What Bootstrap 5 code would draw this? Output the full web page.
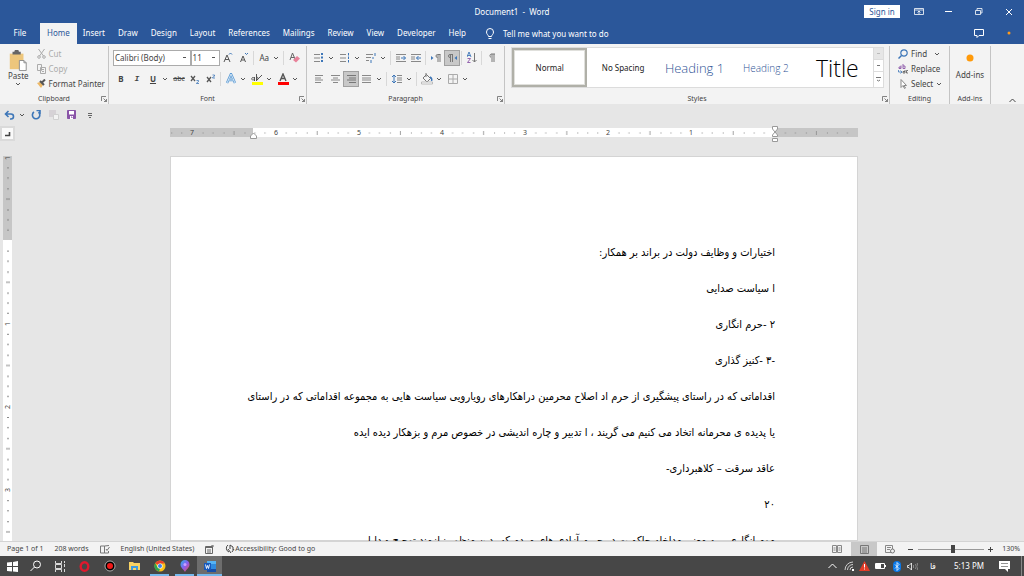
<!DOCTYPE html>
<html lang="en">
<head>
<meta charset="utf-8">
<meta name="viewport" content="width=device-width, initial-scale=1">
<title>Document1 - Word</title>
<link href="https://cdn.jsdelivr.net/npm/bootstrap@5.3.0/dist/css/bootstrap.min.css" rel="stylesheet">
<style>
  :root { --blue: #2b579a; --ink: #444; --accent: #3d76b8; }
  body { height: 100vh; font: 7px/10px "Noto Sans", "Open Sans", sans-serif; color: var(--ink); background: #e6e6e6; }
  button { font: inherit; color: inherit; background: none; border: 0; padding: 0; }
  svg { display: block; flex: none; fill: none; stroke: currentColor; }
  svg text { stroke: none; fill: #444; font: 7px "Noto Sans", sans-serif; text-anchor: middle; }
  a { color: inherit; text-decoration: none; }

  .titlebar, .tabbar { background: var(--blue); color: #fff; }
  .titlebar { height: 23px; font-size: 8px; }
  .tabbar { height: 21px; }
  .tabbar a { padding: 0 6px; line-height: 20px; font-size: 8px; }
  .tabbar a + a { padding-right: 7px; }
  .tabbar a.file-tab { width: 40px; padding: 0; text-align: center; }
  .tabbar a.current { background: #f3f3f3; color: var(--blue); padding: 0 7px; }
  .tabbar a.tell { padding-left: 12px; }
  .sign-in { background: #fff; color: var(--blue); width: 36px; height: 13px; }
  .win-btn { width: 30px; height: 20px; }

  .ribbon { height: 60px; background: #f3f3f3; }
  .grp { border-right: 1px solid #c4c4c4; margin-top: 2px; position: relative; }
  .grp-clip { width: 109px; } .grp-font, .grp-para { width: 198px; }
  .grp-edit { width: 60px; } .grp-add { width: 41px; }
  .ribbon-end { width: 33px; }
  .grp-name { height: 10px; text-align: center; }
  .launcher { position: absolute; right: 1px; bottom: 2px; }
  .tool-rows { padding: 1px 4px 0; }
  .tools { height: 21px; }
  .cmd { height: 15px; display: flex; align-items: center; gap: 3px; white-space: nowrap; font-size: 8px; }
  .ib { width: 16px; height: 16px; display: flex; align-items: center; justify-content: center; }
  .ib.on { background: #c8c8c8; outline: 1px solid #a0a0a0; outline-offset: -1px; }
  .ddn { width: 26px; height: 16px; display: flex; align-items: center; }
  .ddn > :first-child { width: 16px; flex: none; text-align: center; }
  .ddn > svg:last-child { margin-left: 1px; }
  .vsep { width: 1px; height: 14px; margin: 0 2px 0 1px; background: #d8d8d8; }
  .combo { height: 16px; border: 1px solid #ababab; color: var(--ink); font-size: 8px; line-height: 14px; padding: 0 1px;
    -webkit-appearance: none; appearance: none; border-radius: 0;
    background: #fff linear-gradient(#555, #555) no-repeat right 4px center / 3px 1px; }
  .combo-name { width: 78px; } .combo-size { width: 30px; }
  .off { color: #ababab; }
  .gal-wrap { padding: 1px 5px 0 6px; }
  .gallery { height: 41px; background: #fff; border: 1px solid #dcdcdc; color: #222; }
  .gallery .st { flex: 1 1 0; white-space: nowrap; }
  .gallery .st.on { border: 2px solid #b0b0a8; box-shadow: inset 0 0 0 1px #e0e0dc; }
  .gallery .hd { color: #2f5496; font-family: "Open Sans", sans-serif; font-weight: 300; }
  .fs-n { font-size: 8px; } .fs-h1 { font-size: 13px; } .fs-h2 { font-size: 10px; } .fs-t { font: 300 23px/26px "Open Sans", sans-serif; color: #000; }
  .gscroll { width: 10px; border-left: 1px solid #dcdcdc; }
  .gscroll button + button { border-top: 1px solid #dcdcdc; }
  .gscroll button:first-child { background: #e6e6e6; }

  .qat { height: 22px; padding-left: 2px; }
  .qat .ib + .ib { margin-left: 2px; }
  .ruler-row { height: 30px; }
  .tabstop { width: 15px; height: 15px; border: 2px solid #dadada; background: #fafafa; }
  .canvas { padding-right: 11px; }
  .workspace { flex: 1 1 0; min-height: 0; }
  .page-w { width: 688px; }
  .sheet { border: 1px solid #d4d4d4; background: #fff; padding: 78px 82px 0; color: #000; font: 11px/36px "DejaVu Sans Condensed", "DejaVu Sans", sans-serif; }
  .sheet p { margin: 0; white-space: nowrap; }

  .status { height: 15px; background: #f3f3f3; border-top: 1px solid #d4d4d4; }
  .status-info { padding-left: 7px; gap: 11px; }
  .view-on { background: #c8c8c8; width: 26px; height: 14px; }
  .zoomer { -webkit-appearance: none; appearance: none; width: 66px; height: 10px; margin: 0; background: linear-gradient(#999, #999) no-repeat center / 100% 1px; }
  .zoomer::-webkit-slider-thumb { -webkit-appearance: none; width: 4px; height: 8px; background: #444; border-radius: 0; }
  .taskbar { height: 20px; background: #474747; color: #fff; }
  .tk { width: 25px; height: 20px; display: flex; align-items: center; justify-content: center; }
  .tk-s { width: 24px; }
  .tk.run { background: linear-gradient(#76b9ed, #76b9ed) no-repeat center bottom / 19px 2px; }
  .tk.front { background: linear-gradient(#76b9ed, #76b9ed) no-repeat center bottom / 100% 2px #6d6d6d; }
  .peek { width: 3px; height: 20px; border-left: 1px solid #888; }
</style>
</head>
<body class="d-flex flex-column overflow-hidden">

<svg width="0" height="0" class="position-absolute" aria-hidden="true">
  <symbol id="caret" viewBox="0 0 6 6"><path d="M1 2l2 2 2-2" fill="none" stroke="#555"/></symbol>
  <symbol id="launch" viewBox="0 0 6 6"><path d="M.5 5V.5H5M2.500 2.500l3 3M5.500 3v2.500H3" fill="none" stroke="#666" stroke-width=".8"/></symbol>
</svg>

<header>
  <div class="titlebar d-flex align-items-center">
    <div class="col"></div>
    <div>Document1 &nbsp;-&nbsp; Word</div>
    <div class="col d-flex justify-content-end align-items-center">
      <button class="sign-in me-1">Sign in</button>
      <button class="win-btn d-flex align-items-center justify-content-center" aria-label="Ribbon display"><svg width="10" height="8"><path d="M.5.5h9v6h-9zM.5 2h9M5 6V3M3.500 4.500L5 3l1.500 1.500" stroke-width=".8"/></svg></button>
      <button class="win-btn d-flex align-items-center justify-content-center" aria-label="Minimize"><svg width="8" height="8"><path d="M0 3.500h7"/></svg></button>
      <button class="win-btn d-flex align-items-center justify-content-center" aria-label="Restore"><svg width="8" height="8"><path d="M.5 2.500h5v4h-5zM2 2.500v-2h5v4.500H5.500" stroke-width=".8"/></svg></button>
      <button class="win-btn d-flex align-items-center justify-content-center" aria-label="Close"><svg width="8" height="8"><path d="M1 1l6 6M7 1L1 7"/></svg></button>
    </div>
  </div>
  <nav class="tabbar d-flex">
    <a class="file-tab" href="#">File</a><a class="current" href="#">Home</a><a href="#">Insert</a><a href="#">Draw</a><a href="#">Design</a><a href="#">Layout</a><a href="#">References</a><a href="#">Mailings</a><a href="#">Review</a><a href="#">View</a><a href="#">Developer</a><a href="#">Help</a>
    <a href="#" class="tell d-flex align-items-center"><svg class="me-2" width="10" height="12"><path d="M3.500 8.500C3.500 7 1.500 6.500 1.500 4a3.500 3.500 0 0 1 7 0C8.500 6.500 6.500 7 6.500 8.500zM3.500 10.500h3"/></svg>Tell me what you want to do</a>
    <button class="win-btn ms-auto d-flex align-items-center justify-content-center" aria-label="Comments"><svg width="11" height="9"><path d="M.5.5h9v6H5l-2 2v-2H.5z"/></svg></button>
    <button class="win-btn d-flex align-items-center justify-content-center" aria-label="Notice"><svg width="4" height="4"><circle cx="2" cy="2" r="1.500" fill="#ff9a1a" stroke="none"/></svg></button>
  </nav>
</header>

<section class="ribbon d-flex" aria-label="Home ribbon">
  <div class="grp grp-clip d-flex flex-column">
    <div class="d-flex flex-grow-1">
      <button class="d-flex flex-column align-items-center ps-2 fs-n">
        <svg class="mt-1" width="20" height="21" viewBox="0 0 20 23"><path d="M1 4h15v17H1z" fill="#edc67c" stroke="none"/><path d="M4 2h2a2.500 2.500 0 0 1 5 0h2v3H4z" fill="#666" stroke="none"/><path d="M11.500 11.500h5l2.500 2.500v8.500h-7.500z" fill="#fff" stroke="#888"/><path d="M16.500 11.500V14H19" stroke="#888"/></svg>
        Paste
        <svg width="6" height="6"><use href="#caret"/></svg>
      </button>
      <div class="ps-2">
        <button class="cmd off"><svg width="9" height="10"><path d="M1.500 0l5 7M7.500 0l-5 7"/><circle cx="2" cy="8" r="1.300"/><circle cx="7" cy="8" r="1.300"/></svg>Cut</button>
        <button class="cmd off"><svg width="9" height="10"><path d="M.5.5h4v6h-4zM3.500 3.500h5v6h-5zM5 5.500h2M5 7.500h2" fill="#f3f3f3"/></svg>Copy</button>
        <button class="cmd"><svg width="9" height="9"><path d="M0 4l3-1 3 3-2 3z" fill="#edb866" stroke="none"/><path d="M3 2l4 4M5 3.500L8 .5" stroke-width="2" stroke="#555"/></svg>Format Painter</button>
      </div>
    </div>
    <div class="grp-name">Clipboard</div>
    <svg class="launcher" width="6" height="6"><use href="#launch"/></svg>
  </div>

  <div class="grp grp-font d-flex flex-column">
    <div class="flex-grow-1 tool-rows">
      <div class="tools d-flex align-items-center">
        <select class="combo combo-name" aria-label="Font"><option>Calibri (Body)</option></select>
        <select class="combo combo-size" aria-label="Font size"><option>11</option></select>
        <button class="ib" aria-label="Grow font"><svg width="10" height="11"><path d="M1 10L4 3l3 7M2 7.500h4" stroke="#555"/><path d="M6 2.500L7.500 1 9 2.500" stroke="var(--accent)"/></svg></button>
        <button class="ib" aria-label="Shrink font"><svg width="10" height="11"><path d="M1.500 10L4 4l2.500 6M2.500 8h3" stroke="#555"/><path d="M6 1l1.500 1.500L9 1" stroke="var(--accent)"/></svg></button>
        <span class="vsep"></span>
        <button class="ddn" aria-label="Change case"><span class="fs-n">Aa</span><svg width="6" height="6"><use href="#caret"/></svg></button>
        <span class="vsep"></span>
        <button class="ib" aria-label="Clear formatting"><svg width="11" height="11"><path d="M1 8l2.500-7L6 7M2 5.500h3" stroke="#666"/><path d="M4 8l4-4 3 2.500-4 4z" fill="#e8829a" stroke="none"/></svg></button>
      </div>
      <div class="tools d-flex align-items-center">
        <button class="ib fw-bold fs-n">B</button>
        <button class="ib fst-italic fw-bold fs-n font-monospace">I</button>
        <button class="ddn" aria-label="Underline"><span class="text-decoration-underline fw-bold fs-n">U</span><svg width="6" height="6"><use href="#caret"/></svg></button>
        <button class="ib text-decoration-line-through">abc</button>
        <button class="ib" aria-label="Subscript"><svg width="10" height="10"><path d="M1 2l4 5M5 2L1 7" stroke="#555" stroke-width="1.300"/><path d="M6.500 6.500h2v1.200l-2 1.300v.5H9" stroke="var(--accent)" stroke-width=".8"/></svg></button>
        <button class="ib" aria-label="Superscript"><svg width="10" height="10"><path d="M1 3l4 5M5 3L1 8" stroke="#555" stroke-width="1.300"/><path d="M6.500 1h2v1.200l-2 1.300V4H9" stroke="var(--accent)" stroke-width=".8"/></svg></button>
        <span class="vsep"></span>
        <button class="ddn" aria-label="Text effects"><svg height="11" viewBox="-2 0 14 11"><path d="M1 10L5 1l4 9M2.500 7h5" stroke="#5b9bd5" stroke-width="2.400"/><path d="M1 10L5 1l4 9M2.500 7h5" stroke="#fff" stroke-width=".7"/></svg><svg width="6" height="6"><use href="#caret"/></svg></button>
        <button class="ddn" aria-label="Highlight"><svg height="12" viewBox="0 0 16 12"><path d="M4 4.500a1.300 1.300 0 1 0 .1 0M5.500 4v4M7.500 1v6a1.300 1.300 0 1 0 0-3M7 8l6-6" stroke="#555"/><path d="M3 9h11v3H3z" fill="#ff0" stroke="none"/></svg><svg width="6" height="6"><use href="#caret"/></svg></button>
        <button class="ddn" aria-label="Font color"><svg height="12" viewBox="0 0 16 12"><path d="M5 8l3-7 3 7M6 5.500h4" stroke="#555" stroke-width="1.400"/><path d="M3 9h11v3H3z" fill="#f00" stroke="none"/></svg><svg width="6" height="6"><use href="#caret"/></svg></button>
      </div>
    </div>
    <div class="grp-name">Font</div>
    <svg class="launcher" width="6" height="6"><use href="#launch"/></svg>
  </div>

  <div class="grp grp-para d-flex flex-column">
    <div class="flex-grow-1 tool-rows">
      <div class="tools d-flex align-items-center">
        <button class="ddn" aria-label="Bullets"><svg height="10" viewBox="-3 0 16 10"><path d="M0 1.500h6M0 5h6M0 8.500h6" stroke="#888"/><path d="M8 0v10" stroke="var(--accent)" stroke-width="2" stroke-dasharray="2 1.500"/></svg><svg width="6" height="6"><use href="#caret"/></svg></button>
        <button class="ddn" aria-label="Numbering"><svg height="10" viewBox="-3 0 16 10"><path d="M0 1.500h6M0 5h6M0 8.500h6" stroke="#888"/><path d="M8.500 0v10" stroke="var(--accent)" stroke-dasharray="2.500 1"/></svg><svg width="6" height="6"><use href="#caret"/></svg></button>
        <button class="ddn" aria-label="Multilevel list"><svg height="10" viewBox="-3 0 16 10"><path d="M0 1.500h7M0 4.500h5M0 7.500h3" stroke="#888"/><path d="M9 0v3M7 4v2M5 7v3" stroke="var(--accent)"/></svg><svg width="6" height="6"><use href="#caret"/></svg></button>
        <span class="vsep"></span>
        <button class="ib" aria-label="Decrease indent"><svg width="10" height="10"><path d="M0 1.500h10M0 4h4M0 6h4M0 8.500h10" stroke="#888"/><path d="M5 5h4.500M7.500 3l2 2-2 2" stroke="var(--accent)"/></svg></button>
        <button class="ib" aria-label="Increase indent"><svg width="10" height="10"><path d="M0 1.500h10M0 4h4M0 6h4M0 8.500h10" stroke="#888"/><path d="M10 5H5.500M7.500 3l-2 2 2 2" stroke="var(--accent)"/></svg></button>
        <span class="vsep"></span>
        <button class="ib" aria-label="Left to right"><svg width="10" height="10"><path d="M0 3l2.500 2L0 7z" fill="var(--accent)" stroke="none"/><path d="M9.500 1.500H6.500a1.500 1.500 0 0 0 0 3M7 1.500V9M9 1.500V9" stroke="#777"/></svg></button>
        <button class="ib on" aria-label="Right to left"><svg width="10" height="10"><path d="M10 3L7.500 5 10 7z" fill="var(--accent)" stroke="none"/><path d="M6 1.500H3a1.500 1.500 0 0 0 0 3M3.500 1.500V9M5.500 1.500V9" stroke="#777"/></svg></button>
        <span class="vsep"></span>
        <button class="ib" aria-label="Sort"><svg width="10" height="11"><path d="M0 5l2-5 2 5M.5 3.500h3" stroke="var(--accent)" stroke-width=".9"/><path d="M.5 6.500h3l-3 4h3" stroke="#8a55a8" stroke-width=".9"/><path d="M7.500 1v9M5.500 8l2 2 2-2" stroke="#777"/></svg></button>
        <span class="vsep"></span>
        <button class="ib" aria-label="Show marks"><svg width="8" height="10"><path d="M7 1H3a2 2 0 0 0 0 3.500M4 1v8M6 1v8" stroke="#777"/></svg></button>
      </div>
      <div class="tools d-flex align-items-center">
        <button class="ib" aria-label="Align left"><svg width="9" height="8"><path d="M0 .5h8M0 3h6M0 5h8M0 7.500h6" stroke="#888"/></svg></button>
        <button class="ib" aria-label="Center"><svg width="9" height="8"><path d="M0 .5h9M2 3h5M0 5h9M2 7.500h5" stroke="#888"/></svg></button>
        <button class="ib on" aria-label="Align right"><svg width="9" height="8"><path d="M0 .5h9M2 3h7M0 5h9M2 7.500h7" stroke="#777"/></svg></button>
        <button class="ddn" aria-label="Justify"><svg height="8" viewBox="-3 0 16 8"><path d="M0 .5h9M0 3h9M0 5h9M0 7.500h9" stroke="#888"/></svg><svg width="6" height="6"><use href="#caret"/></svg></button>
        <span class="vsep"></span>
        <button class="ddn" aria-label="Line spacing"><svg height="10" viewBox="-3 0 16 10"><path d="M5 1.500h5M5 4h5M5 6h5M5 8.500h5" stroke="#888"/><path d="M2 1v8M0 3l2-2 2 2M0 7l2 2 2-2" stroke="var(--accent)"/></svg><svg width="6" height="6"><use href="#caret"/></svg></button>
        <span class="vsep"></span>
        <button class="ddn" aria-label="Shading"><svg height="12" viewBox="-2 0 16 12"><path d="M2 5l3.500-3.500 4 4L6 9zM5 4V0" stroke="#777"/><path d="M9 4c2 1 2 3 1.500 4" stroke="var(--accent)" stroke-width="1.500"/><path d="M.5 9h11v2H.5z" stroke="#bbb" fill="#fff"/></svg><svg width="6" height="6"><use href="#caret"/></svg></button>
        <button class="ddn" aria-label="Borders"><svg height="10" viewBox="-3 0 16 10"><path d="M.5.5h9v9h-9zM5 .5v9M.5 5h9" stroke="#aaa"/></svg><svg width="6" height="6"><use href="#caret"/></svg></button>
      </div>
    </div>
    <div class="grp-name">Paragraph</div>
    <svg class="launcher" width="6" height="6"><use href="#launch"/></svg>
  </div>

  <div class="grp flex-grow-1 d-flex flex-column">
    <div class="flex-grow-1 gal-wrap">
      <div class="gallery d-flex">
        <button class="st on fs-n">Normal</button>
        <button class="st fs-n">No Spacing</button>
        <button class="st hd fs-h1">Heading 1</button>
        <button class="st hd fs-h2">Heading 2</button>
        <button class="st fs-t">Title</button>
        <div class="gscroll d-flex flex-column">
          <button class="flex-fill d-flex align-items-center justify-content-center" aria-label="Scroll up"><svg width="3" height="1"><path d="M0 .5h3" stroke="#bbb"/></svg></button>
          <button class="flex-fill d-flex align-items-center justify-content-center" aria-label="Scroll down"><svg width="3" height="1"><path d="M0 .5h3" stroke="#777"/></svg></button>
          <button class="flex-fill d-flex align-items-center justify-content-center" aria-label="More styles"><svg width="5" height="5"><path d="M0 .5h5M1 3l1.500 1L4 3" stroke="#777"/></svg></button>
        </div>
      </div>
    </div>
    <div class="grp-name">Styles</div>
    <svg class="launcher" width="6" height="6"><use href="#launch"/></svg>
  </div>

  <div class="grp grp-edit d-flex flex-column">
    <div class="flex-grow-1 ps-2">
      <button class="cmd"><svg width="10" height="10"><circle cx="6" cy="4" r="3.200" stroke="var(--accent)" stroke-width="1.200"/><path d="M3.500 6.500L.5 9.500" stroke="var(--accent)" stroke-width="1.500"/></svg>Find <svg class="ms-1" width="6" height="6"><use href="#caret"/></svg></button>
      <button class="cmd"><svg width="10" height="10"><path d="M3 1.500v3H1V3h2M5 0v4.500h2V2H5" stroke="#8a55a8" stroke-width=".9"/><path d="M.5 6v2h3M2.500 6.500L4 8 2.500 9.500" stroke="var(--accent)" stroke-width=".8"/><path d="M7 6v3H5V7.500h2M10 6.500H8.500V9H10" stroke="#555" stroke-width=".8"/></svg>Replace</button>
      <button class="cmd"><svg width="10" height="10"><path d="M3 .5v8l2-2 1.500 3 1-.5L6 6.500h2.500z" stroke="#888" fill="#fff"/></svg>Select<svg width="6" height="6"><use href="#caret"/></svg></button>
    </div>
    <div class="grp-name">Editing</div>
  </div>
  <div class="grp grp-add d-flex flex-column">
    <button class="flex-grow-1 d-flex flex-column align-items-center pt-2 fs-n gap-2"><svg width="8" height="8"><circle cx="4" cy="4" r="3.500" fill="#ff9a0a" stroke="none"/></svg>Add-ins</button>
    <div class="grp-name">Add-ins</div>
  </div>
  <button class="ribbon-end d-flex align-items-end justify-content-end pe-2" aria-label="Collapse ribbon"><svg width="7" height="6"><path d="M.5 4l3-3 3 3"/></svg></button>
</section>

<div class="qat d-flex align-items-center">
  <button class="ddn" aria-label="Undo"><svg height="10" viewBox="-2 0 16 10" color="#3d76b8"><path d="M4.500 1L1.500 4l3 3M2 4h5a2.500 2.500 0 0 1 0 5H6" stroke-width="1.600"/></svg><svg width="6" height="6"><use href="#caret"/></svg></button>
  <button class="ib" aria-label="Redo"><svg width="10" height="10" color="#3d76b8"><path d="M7.500 2.200A3.700 3.700 0 1 1 3 2M5.500.5H9v3.500" stroke-width="1.600"/></svg></button>
  <button class="ib" aria-label="Copy"><svg width="10" height="10"><path d="M0 0h7v7H0z" fill="#d6d2d6" stroke="none"/><path d="M4.500 4.500h5v5h-5z" fill="#f3f3f3" stroke="#d0d0d0"/></svg></button>
  <button class="ib" aria-label="Save"><svg width="10" height="10"><path d="M.5.5h8v8h-8z" fill="#8a55a8" stroke="#8a55a8"/><path d="M2 1h5v3.500H2zM3 6h3v3H3z" fill="#fff" stroke="none"/><path d="M4 7h1v1" stroke="#8a55a8"/></svg></button>
  <button class="ib" aria-label="Customize toolbar"><svg width="4" height="5"><path d="M0 .5h4M0 2.500h4M1 4.500h2" stroke-width=".8"/></svg></button>
</div>

<div class="ruler-row d-flex">
  <button class="tabstop d-flex align-items-center justify-content-center" aria-label="Tab stop"><svg width="6" height="6"><path d="M0 4.500h4.500V1" stroke-width="1.600"/></svg></button>
  <div class="canvas flex-grow-1 d-flex justify-content-center">
    <svg class="page-w" height="18" viewBox="0 0 688 18">
      <defs>
        <pattern id="hticks" x="22" width="83.200" height="18" patternUnits="userSpaceOnUse">
          <path d="M10.500 7h1M20.500 7h1M31.500 7h1M52.500 7h1M62.500 7h1M72.500 7h1" stroke="#888"/><path d="M42 5v4" stroke="#888" stroke-width=".8"/>
        </pattern>
      </defs>
      <path d="M0 2h688v9H0z" fill="#c6c6c6" stroke="none"/><path d="M83 2h522v9H83z" fill="#fff" stroke="none"/>
      <path d="M0 2h688v9H0z" fill="url(#hticks)" stroke="none"/>
      <text x="22" y="9">7</text><text x="106" y="9">6</text><text x="189" y="9">5</text><text x="272" y="9">4</text><text x="355" y="9">3</text><text x="438" y="9">2</text><text x="521" y="9">1</text>
      <path d="M80.500 12.500V10L83.500 7l3 3v2.500zM602.500.5h5V3L605 6l-2.500-3zM602.500 10.500V9L605 6l2.500 3v1.500zM602.500 12.500h5v3h-5z" fill="#fff" stroke="#999"/>
    </svg>
  </div>
</div>

<main class="workspace d-flex overflow-hidden">
  <svg width="15" height="500" viewBox="0 0 15 500">
    <defs>
      <pattern id="vticks" y="1.500" width="15" height="83.200" patternUnits="userSpaceOnUse">
        <path d="M7 10.500h2M7 20.500h2M7 31.500h2M7 52.500h2M7 62.500h2M7 72.500h2M6 41.500h4" stroke="#888"/>
      </pattern>
    </defs>
    <path d="M3 0h9v500H3z" fill="#fff" stroke="none"/><path d="M3 0h9v84H3z" fill="#c6c6c6" stroke="none"/>
    <path d="M3 0h9v500H3z" fill="url(#vticks)" stroke="none"/>
    <text transform="translate(10 2) rotate(-90)">1</text><text transform="translate(10 168) rotate(-90)">1</text><text transform="translate(10 251) rotate(-90)">2</text><text transform="translate(10 334) rotate(-90)">3</text>
  </svg>
  <div class="canvas flex-grow-1 d-flex justify-content-center">
    <article class="page-w sheet" lang="fa" dir="rtl">
      <p>اختیارات و وظایف دولت در براند بر همکار:</p>
      <p>ا سیاست صدایی</p>
      <p>۲ -حرم انگاری</p>
      <p>-۳ -کنیز گذاری</p>
      <p>اقداماتی که در راستای پیشگیری از حرم اد اصلاح محرمین دراهکارهای رویارویی سیاست هایی به مجموعه اقداماتی که در راستای</p>
      <p>یا پدیده ی محرمانه اتخاد می کنیم می گریند ، ا تدبیر و چاره اندیشی در خصوص مرم و بزهکار دیده ایده</p>
      <p>عاقد سرقت – کلاهبرداری-</p>
      <p>۲۰</p>
      <p>موم انگاری – به معنی مداخله حاکمیت در حریم آزادی های مردم که بدین منظور نیازمند توجیح و دلیل-</p>
    </article>
  </div>
</main>

<footer>
  <div class="status d-flex align-items-center">
    <div class="status-info d-flex align-items-center">
      <span>Page 1 of 1</span>
      <span>208 words</span>
      <svg width="10" height="9"><path d="M.5 1h4v7h-4zM4.500 8V1L9 .5M4.500 8h4V6M6 4l1 1.500L9.500 2" stroke="#777"/></svg>
      <span>English (United States)</span>
      <svg width="9" height="9"><path d="M.5 1.500h7v7h-7zM0 2.500h8M2 5h4M2 7h4M6 0h2v2" stroke="#666"/></svg>
      <span class="d-flex align-items-center"><svg width="10" height="10"><path d="M3 1a4 4 0 0 0 1 7M5 1l3 2M5 1v4M3 5l3 4M8 3v3M7 8l2-3" stroke="#444"/></svg>Accessibility: Good to go</span>
    </div>
    <div class="ms-auto d-flex align-items-center">
      <svg class="me-2" width="11" height="9"><path d="M.5.5h4v7h-4zM5.500.5h4v7h-4zM1.500 3h2M1.500 5h2M6.500 3h2M6.500 5h2" stroke="#888"/></svg>
      <button class="view-on d-flex align-items-center justify-content-center" aria-label="Print layout"><svg width="9" height="9"><path d="M.5.5h8v8h-8zM2 3h5M2 5h5M2 7h5" stroke="#777"/></svg></button>
      <svg class="ms-2 me-2" width="11" height="9"><path d="M.5.5h7v7h-7zM2 2.500h4M2 4.500h3" stroke="#888"/><circle cx="7.500" cy="6" r="2" fill="#f3f3f3" stroke="#777"/></svg>
      <button class="ms-1" aria-label="Zoom out"><svg width="6" height="7"><path d="M0 3.500h5"/></svg></button>
      <input class="zoomer mx-1" type="range" min="0" max="100" value="53" aria-label="Zoom">
      <button aria-label="Zoom in"><svg width="6" height="7"><path d="M0 3.500h5M2.500 1v5"/></svg></button>
      <span class="ms-2 me-1">130%</span>
    </div>
  </div>
  <div class="taskbar d-flex align-items-center">
    <button class="tk tk-s" aria-label="Start"><svg width="11" height="11"><path d="M0 1.500L5 1v4H0zM6 1l5-1v5H6zM0 6h5v4.500L0 10zM6 6h5v5l-5-.5z" fill="#fff" stroke="none"/></svg></button>
    <button class="tk tk-s" aria-label="Search"><svg width="12" height="12"><circle cx="7" cy="4.500" r="3.500"/><path d="M4.500 7L.5 11"/></svg></button>
    <button class="tk tk-s" aria-label="Task view"><svg width="11" height="11"><path d="M.5 0v2.500h6V0M.5 11V8.500h6V11M.5 3.500h6v4h-6zM9.500 0v2M9.500 3v3M9.500 8v3" stroke-width=".8"/></svg></button>
    <button class="tk" aria-label="Opera"><svg width="11" height="11"><ellipse cx="5.500" cy="5.500" rx="3.800" ry="4.300" stroke="#e0182d" stroke-width="2.400"/></svg></button>
    <button class="tk" aria-label="Recorder"><svg width="12" height="12"><circle cx="6" cy="6" r="5" fill="#000" stroke="#ccc" stroke-width=".8"/><circle cx="6" cy="6" r="3" fill="#f01818" stroke="none"/></svg></button>
    <button class="tk" aria-label="File Explorer"><svg width="11" height="10"><path d="M0 1h4l1 1h6v7H0z" fill="#f8d263" stroke="none"/><path d="M2 5h7v4H7V7H4v2H2z" fill="#3e9be0" stroke="none"/></svg></button>
    <button class="tk run" aria-label="Chrome"><svg width="12" height="12" viewBox="0 0 12 12"><g stroke="none"><circle cx="6" cy="6" r="5.500" fill="#fbc116"/><path d="M6 6L1.200 3.200A5.500 5.500 0 0 1 10.800 3.500H6z" fill="#e8402f"/><path d="M1.200 3.200L4 8l2 .5-1 3A5.500 5.500 0 0 1 1.200 3.200z" fill="#2ca64f"/><circle cx="6" cy="6" r="2.600" fill="#fff"/><circle cx="6" cy="6" r="2" fill="#3f7fe8"/></g></svg></button>
    <button class="tk run" aria-label="Maps"><svg width="10" height="12"><defs><linearGradient id="pin" x2="1" y2="1"><stop stop-color="#28b5e8"/><stop offset=".5" stop-color="#8a5cf0"/><stop offset="1" stop-color="#f0503c"/></linearGradient></defs><path d="M5 0a4.500 4.500 0 0 1 4.500 4.500C9.500 8 6.500 9 5 12 3.500 9 .5 8 .5 4.500A4.500 4.500 0 0 1 5 0z" fill="url(#pin)" stroke="none"/><circle cx="5" cy="4.500" r="1.500" fill="#c9a0ff" stroke="none"/></svg></button>
    <button class="tk front" aria-label="Word"><svg width="12" height="11"><path d="M3 0h9v11H3z" fill="#2f8be0" stroke="none"/><path d="M3 0h9v3H3z" fill="#55b3f5" stroke="none"/><path d="M3 8h9v3H3z" fill="#174ea8" stroke="none"/><path d="M0 2h7v7H0z" fill="#185abd" stroke="none"/><path d="M1.500 3.500l1 4 1-3 1 3 1-4" stroke="#fff" stroke-width=".9"/></svg></button>
    <div class="ms-auto d-flex align-items-center">
      <button class="ib" aria-label="Hidden icons"><svg width="9" height="6"><path d="M.5 5l4-4 4 4"/></svg></button>
      <button class="ib" aria-label="Network"><svg width="10" height="10"><path d="M1 9A8 8 0 0 1 9 1M3.500 9A5.500 5.500 0 0 1 9 3.500M6 9a3 3 0 0 1 3-3" stroke="#ccc"/><path d="M8 8h2v2H8z" fill="#fff" stroke="none"/></svg></button>
      <button class="ib" aria-label="Warning"><svg width="11" height="10"><path d="M5.500 0L11 10H0z" fill="#e23c28" stroke="none"/><path d="M5.500 3v3.500M5.500 7.500v1" stroke="#fff"/></svg></button>
      <button class="ib" aria-label="Battery"><svg width="11" height="7"><path d="M.5.5h9v5h-9zM10.500 2v2"/><path d="M1 1h5v4H1z" fill="#fff" stroke="none"/></svg></button>
      <button class="ib" aria-label="Bluetooth"><svg width="8" height="11"><rect width="8" height="11" rx="4" fill="#0a78e8" stroke="none"/><path d="M2 3.500l4 4-2 2v-8l2 2-4 4" stroke-width=".8"/></svg></button>
      <button class="ib" aria-label="Volume"><svg width="11" height="9"><path d="M.5 3.500H2L4.500 1v7L2 5.500H.5z" stroke-width=".8"/><path d="M6.500 3v3M8.500 2a5 5 0 0 1 0 5M10.200 1a7 7 0 0 1 0 7" stroke="#999" stroke-width=".8"/></svg></button>
      <button class="tk fs-n" lang="fa">فا</button>
      <span class="fs-n text-center px-2">5:13 PM</span>
      <button class="tk" aria-label="Notifications"><svg width="12" height="11"><path d="M0 0h11v8H9v3L6 8H0z" fill="#fff" stroke="none"/><path d="M2 2.500h7M2 5.500h7" stroke="#777" stroke-width=".8"/></svg></button>
      <span class="peek ms-1"></span>
    </div>
  </div>
</footer>
<script src="https://cdn.jsdelivr.net/npm/bootstrap@5.3.0/dist/js/bootstrap.bundle.min.js"></script>
</body>
</html>
